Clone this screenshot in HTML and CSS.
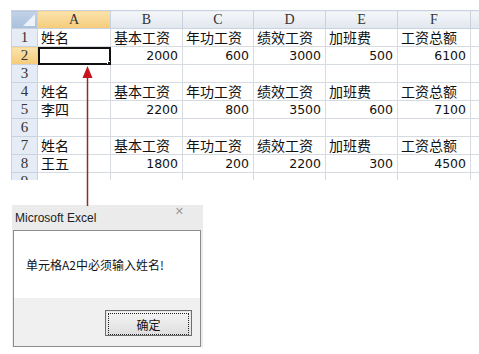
FILE: index.html
```html
<!DOCTYPE html>
<html lang="zh-CN">

<head>
    <meta charset="UTF-8">
    <meta name="viewport" content="width=device-width, initial-scale=1.0">
    <title>数据验证</title>
    <link rel="stylesheet" href="styles.css">
</head>

<body>
    <!-- 工作表 -->
    <div class="sheet">
        <table class="grid">
            <colgroup>
                <col class="c-row">
                <col class="c-a">
                <col class="c-b">
                <col class="c-c">
                <col class="c-d">
                <col class="c-e">
                <col class="c-f">
                <col class="c-g">
            </colgroup>
            <tr class="head">
                <th class="corner"><span class="tri"></span></th>
                <th class="on">A</th>
                <th>B</th>
                <th>C</th>
                <th>D</th>
                <th>E</th>
                <th>F</th>
                <th></th>
            </tr>
            <tr>
                <th class="rh">1</th>
                <td>姓名</td><td>基本工资</td><td>年功工资</td><td>绩效工资</td><td>加班费</td><td>工资总额</td><td></td>
            </tr>
            <tr>
                <th class="rh on">2</th>
                <td class="sel"><span class="handle"></span></td>
                <td class="num">2000</td><td class="num">600</td><td class="num">3000</td><td class="num">500</td><td class="num">6100</td><td></td>
            </tr>
            <tr>
                <th class="rh">3</th>
                <td></td><td></td><td></td><td></td><td></td><td></td><td></td>
            </tr>
            <tr>
                <th class="rh">4</th>
                <td>姓名</td><td>基本工资</td><td>年功工资</td><td>绩效工资</td><td>加班费</td><td>工资总额</td><td></td>
            </tr>
            <tr>
                <th class="rh">5</th>
                <td>李四</td>
                <td class="num">2200</td><td class="num">800</td><td class="num">3500</td><td class="num">600</td><td class="num">7100</td><td></td>
            </tr>
            <tr>
                <th class="rh">6</th>
                <td></td><td></td><td></td><td></td><td></td><td></td><td></td>
            </tr>
            <tr>
                <th class="rh">7</th>
                <td>姓名</td><td>基本工资</td><td>年功工资</td><td>绩效工资</td><td>加班费</td><td>工资总额</td><td></td>
            </tr>
            <tr>
                <th class="rh">8</th>
                <td>王五</td>
                <td class="num">1800</td><td class="num">200</td><td class="num">2200</td><td class="num">300</td><td class="num">4500</td><td></td>
            </tr>
            <tr>
                <th class="rh">9</th>
                <td></td><td></td><td></td><td></td><td></td><td></td><td></td>
            </tr>
        </table>
    </div>

    <!-- 指向A2的箭头 -->
    <svg class="arrow" width="16" height="142" viewBox="0 0 16 142">
        <line x1="7.5" y1="12" x2="7.5" y2="142" stroke="#8e2a2a" stroke-width="1.5" />
        <polygon points="7.5,2 2.5,14 12.5,14" fill="#c8141e" />
    </svg>

    <!-- 提示框 -->
    <div class="dlg">
        <div class="dlg-title">
            <span>Microsoft Excel</span>
            <span class="close">✕</span>
        </div>
        <div class="dlg-body">
            <div class="msg">单元格A2中必须输入姓名!</div>
            <div class="foot">
                <button class="ok"><span>确定</span></button>
            </div>
        </div>
    </div>
</body>

</html>
```

FILE: styles.css
```css
body {
    margin: 0;
    background: #fff;
    font-family: "Noto Sans CJK SC", sans-serif;
    position: relative;
    width: 479px;
    height: 354px;
    overflow: hidden;
}

.sheet {
    margin: 10px 0 0 11px;
    width: 468px;
    height: 170px;
    overflow: hidden;
}

.grid {
    border-collapse: collapse;
    table-layout: fixed;
    width: 489px;
}

.c-row { width: 26px; }
.c-a { width: 73px; }
.c-b { width: 72px; }
.c-c { width: 71px; }
.c-d { width: 72px; }
.c-e { width: 72px; }
.c-f { width: 73px; }
.c-g { width: 30px; }

.grid tr {
    height: 18px;
}

.grid td {
    border: 1px solid #d6dbe2;
    padding: 0 3px;
    height: 17px;
    font-size: 14px;
    line-height: 17px;
    color: #111;
    white-space: nowrap;
    overflow: hidden;
}

.grid td.num {
    text-align: right;
    padding-right: 4px;
    font-family: "DejaVu Sans", sans-serif;
    font-size: 12.5px;
}

.grid th {
    font-family: "Liberation Serif", serif;
    font-weight: normal;
    color: #333;
    padding: 0;
    border: 1px solid #c9d3df;
}

.head th {
    background: linear-gradient(#f4f6f9, #e2e7ee);
    font-size: 14px;
    height: 17px;
}

.head th.on {
    background: linear-gradient(#fbe3ab, #f5cb7a);
}

.corner {
    position: relative;
    background: linear-gradient(#c3d3e8, #a9bfdc) !important;
}

.tri {
    position: absolute;
    right: 2px;
    bottom: 2px;
    width: 0;
    height: 0;
    border-left: 12px solid transparent;
    border-bottom: 12px solid #eef3fa;
}

.rh {
    background: #e6ecf5;
    font-size: 15px;
}

.rh.on {
    background: linear-gradient(#fbe3ab, #f5cb7a);
}

.sel {
    position: relative;
    outline: 2px solid #111;
    outline-offset: -2px;
}

.handle {
    position: absolute;
    right: -4px;
    bottom: -4px;
    width: 5px;
    height: 5px;
    background: #111;
    border: 1px solid #fff;
    z-index: 2;
}

.arrow {
    position: absolute;
    left: 80px;
    top: 64px;
}

.dlg {
    margin: 25px 0 0 12px;
    width: 191px;
    background: #ebebeb;
}

.dlg-title {
    height: 25px;
    display: flex;
    justify-content: space-between;
    align-items: flex-start;
    font-family: "Liberation Sans", Arial, sans-serif;
    font-size: 12px;
    color: #222;
}

.dlg-title span:first-child {
    margin: 6px 0 0 3px;
}

.close {
    margin: 0 19px 0 0;
    font-family: "DejaVu Sans", sans-serif;
    font-size: 11px;
    color: #9a9a9a;
}

.dlg-body {
    margin: 0 2px 0 1px;
    border: 1px solid #8c8c8c;
    background: #f0f0f0;
}

.msg {
    height: 67px;
    background: #fff;
    display: flex;
    align-items: center;
    padding-left: 12px;
    font-size: 12px;
    color: #111;
}

.foot {
    height: 48px;
    display: flex;
    justify-content: flex-end;
    align-items: flex-start;
}

.ok {
    margin: 12px 8px 0 0;
    width: 87px;
    height: 26px;
    padding: 2px;
    border: 1px solid #6e6e6e;
    box-shadow: inset 0 0 0 1px #e8e8e8;
    background: linear-gradient(#f6f6f6, #dedede);
    font-family: "Noto Sans CJK SC", sans-serif;
    font-size: 12px;
    color: #111;
}

.ok span {
    display: flex;
    justify-content: center;
    align-items: center;
    height: 100%;
    border: 1px dotted #222;
}
```
